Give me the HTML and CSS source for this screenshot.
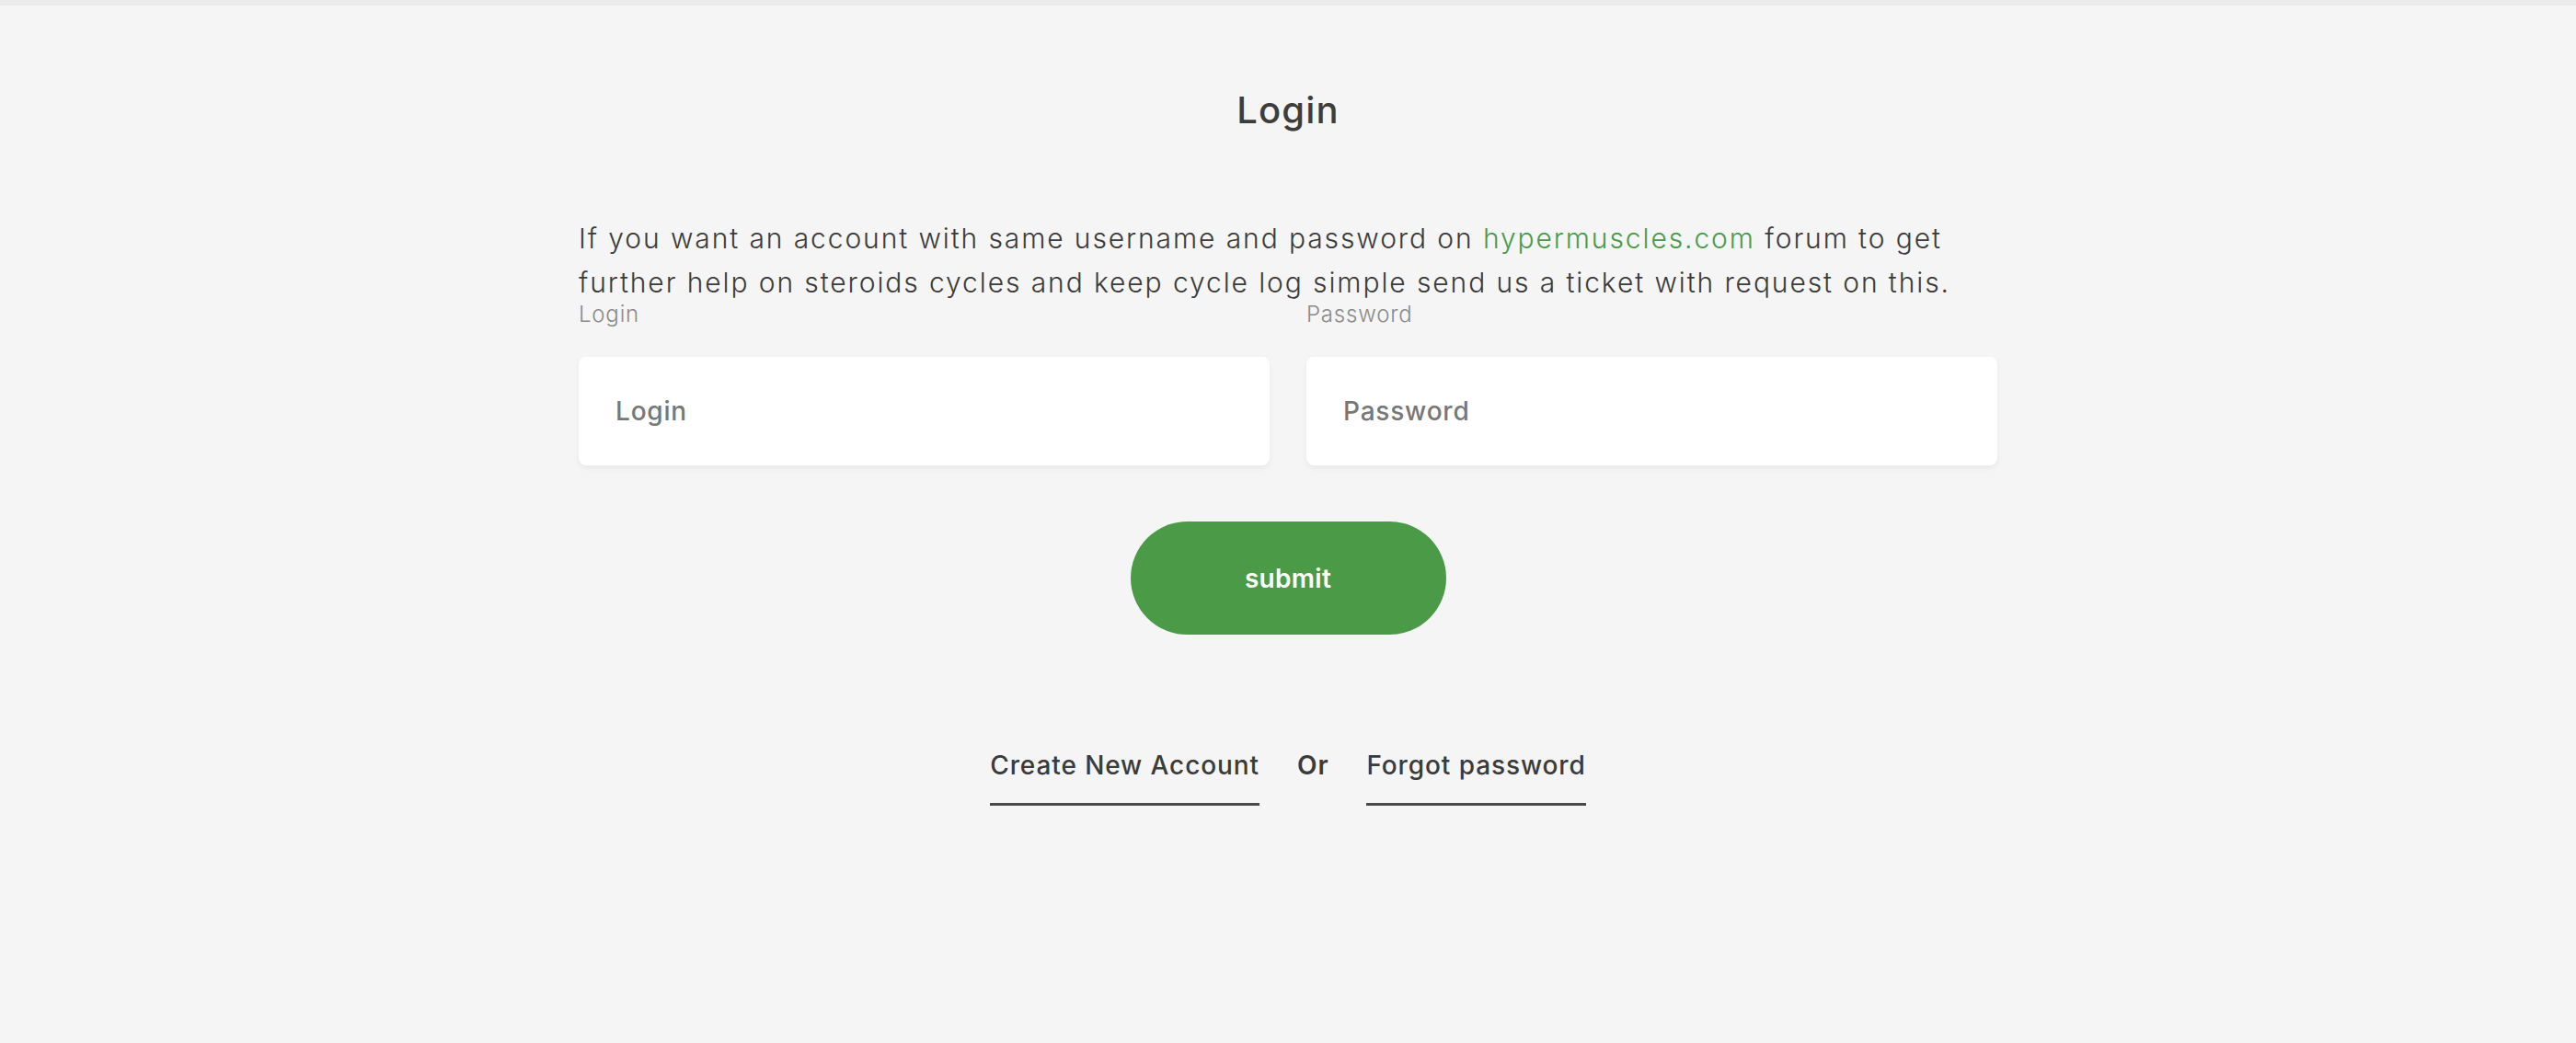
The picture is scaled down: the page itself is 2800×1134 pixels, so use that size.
FILE: index.html
```html
<!DOCTYPE html>
<html lang="en">
<head>
  <meta charset="UTF-8" />
  <meta name="viewport" content="width=device-width, initial-scale=1.0"/>
  <title>Login</title>
  <link rel="stylesheet" href="styles.css">
</head>
<body>

  <div class="login-page">
    <h1>Login</h1>

    <p class="intro">
      If you want an account with same username and password on <a href="#" class="green-link">hypermuscles.com</a> forum to get
      further help on steroids cycles and keep cycle log simple send us a ticket with request on this.
    </p>

    <!-- Form -->
    <form class="login-form" onsubmit="return false;">
      <div class="fields">
        <div class="field">
          <label for="login">Login</label>
          <input type="text" id="login" placeholder="Login" />
        </div>
        <div class="field">
          <label for="password">Password</label>
          <input type="password" id="password" placeholder="Password" />
        </div>
      </div>
      <button type="submit" class="submit-btn">submit</button>
    </form>

    <div class="bottom-links">
      <a href="#" class="line-link">Create New Account</a>
      <span class="or">Or</span>
      <a href="#" class="line-link">Forgot password</a>
    </div>
  </div>

</body>
</html>
```

FILE: styles.css
```css
body {
  margin: 0;
  padding: 0;
  font-family: Inter, 'Liberation Sans', sans-serif;
  background: #f5f5f5;
  color: #3b3b3b;
  border-top: 6px solid #ebebeb;
}

.login-page {
  width: 1542px;
  margin: 0 auto;
}

h1 {
  margin: 90px 0 0;
  font-size: 40px;
  line-height: 48px;
  font-weight: 500;
  letter-spacing: 1.2px;
  text-align: center;
  color: #3d3d3d;
}

.intro {
  margin: 91px 0 0;
  font-size: 30px;
  line-height: 48px;
  font-weight: 300;
  letter-spacing: 1.9px;
  color: #3b3b3b;
}

.green-link {
  color: #4a9a4a;
  text-decoration: none;
}

.fields {
  display: grid;
  grid-template-columns: 1fr 1fr;
  gap: 40px;
  margin-top: -4px;
}

.field label {
  display: block;
  font-size: 24px;
  line-height: 30px;
  font-weight: 300;
  letter-spacing: 0.8px;
  color: #8a8a8a;
  margin-bottom: 31px;
}

.field input {
  display: block;
  box-sizing: border-box;
  width: 100%;
  height: 118px;
  padding: 0 40px;
  border: none;
  border-radius: 8px;
  background: #fff;
  box-shadow: 0 3px 6px rgba(0, 0, 0, 0.06);
  font-family: inherit;
  font-size: 28px;
  font-weight: 500;
  letter-spacing: 0.8px;
  color: #444;
  outline: none;
}

.field input::placeholder {
  color: #777;
}

.submit-btn {
  display: block;
  margin: 61px auto 0;
  width: 343px;
  height: 123px;
  border: none;
  border-radius: 62px;
  background: #4a9a47;
  color: #fff;
  font-family: inherit;
  font-size: 28px;
  font-weight: 600;
  letter-spacing: 0.3px;
  cursor: pointer;
}

.bottom-links {
  margin-top: 125px;
  display: flex;
  justify-content: center;
  align-items: flex-start;
  gap: 41px;
  font-size: 28px;
  line-height: 34px;
  font-weight: 500;
  letter-spacing: 0.9px;
}

.line-link {
  color: #3b3b3b;
  text-decoration: none;
  padding-bottom: 24px;
  border-bottom: 3px solid #4a4a4a;
}

.or {
  font-weight: 600;
  color: #3b3b3b;
}
```
